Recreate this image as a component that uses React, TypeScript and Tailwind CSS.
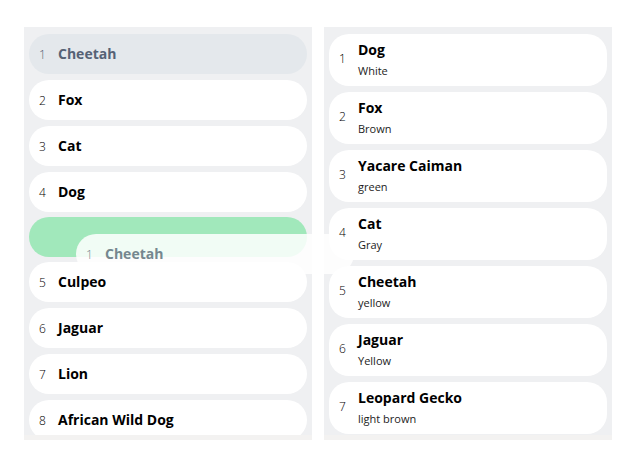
import type { ReactNode } from "react";

type Animal = { name: string; color?: string };

const source: Animal[] = [
  { name: "Cheetah" },
  { name: "Fox" },
  { name: "Cat" },
  { name: "Dog" },
  { name: "Culpeo" },
  { name: "Jaguar" },
  { name: "Lion" },
  { name: "African Wild Dog" },
];

const detailed: Animal[] = [
  { name: "Dog", color: "White" },
  { name: "Fox", color: "Brown" },
  { name: "Yacare Caiman", color: "green" },
  { name: "Cat", color: "Gray" },
  { name: "Cheetah", color: "yellow" },
  { name: "Jaguar", color: "Yellow" },
  { name: "Leopard Gecko", color: "light brown" },
];

const DRAGGED = 0;
const DROP_AFTER = 3;

function Card({ index, animal, className = "bg-white" }: { index: number; animal: Animal; className?: string }) {
  const layout = animal.color ? "h-[52px] items-start pt-1.5" : "h-10 items-baseline pt-2.5";
  return (
    <div className={`flex rounded-[20px] px-2.5 ${layout} ${className}`}>
      <span className={`w-[19px] shrink-0 text-xs font-light ${animal.color ? "leading-[38px]" : "leading-5"}`}>
        {index + 1}
      </span>
      <div className="min-w-0 whitespace-nowrap">
        <div className="text-sm leading-5 font-bold">{animal.name}</div>
        {animal.color && <div className="mt-px text-[11px] leading-5 text-[#1c1c1c]">{animal.color}</div>}
      </div>
    </div>
  );
}

function Panel({ children }: { children: ReactNode }) {
  return (
    <section className="min-w-0 flex-1 border-b-[5px] border-[#f3f2f1] bg-[#eff0f2]">
      <ul className="h-[408px] overflow-hidden px-[5px] pt-[7px]">{children}</ul>
    </section>
  );
}

export default function App() {
  return (
    <main className="flex gap-3 bg-white pt-[27px] pr-[23px] pl-6 font-['Open_Sans','Noto_Sans',sans-serif] text-black">
      <div className="relative flex min-w-0 flex-1">
        <Panel>
          {source.map((animal, i) => (
            <li key={animal.name} className={i === DROP_AFTER ? "mb-[5px]" : "mb-1.5"}>
              <Card
                index={i}
                animal={animal}
                className={i === DRAGGED ? "bg-[#e4e8ec] text-[#566275]" : "bg-white"}
              />
              {i === DROP_AFTER && <div className="mt-[5px] h-10 rounded-[20px] bg-[#a1e8bb]" />}
            </li>
          ))}
        </Panel>
        <div className="absolute top-[207px] right-[-42px] left-[52px] z-10">
          <Card index={DRAGGED} animal={source[DRAGGED]} className="bg-white/85 text-[#75878f]" />
        </div>
      </div>
      <Panel>
        {detailed.map((animal, i) => (
          <li key={animal.name} className="mb-1.5">
            <Card index={i} animal={animal} />
          </li>
        ))}
      </Panel>
    </main>
  );
}
